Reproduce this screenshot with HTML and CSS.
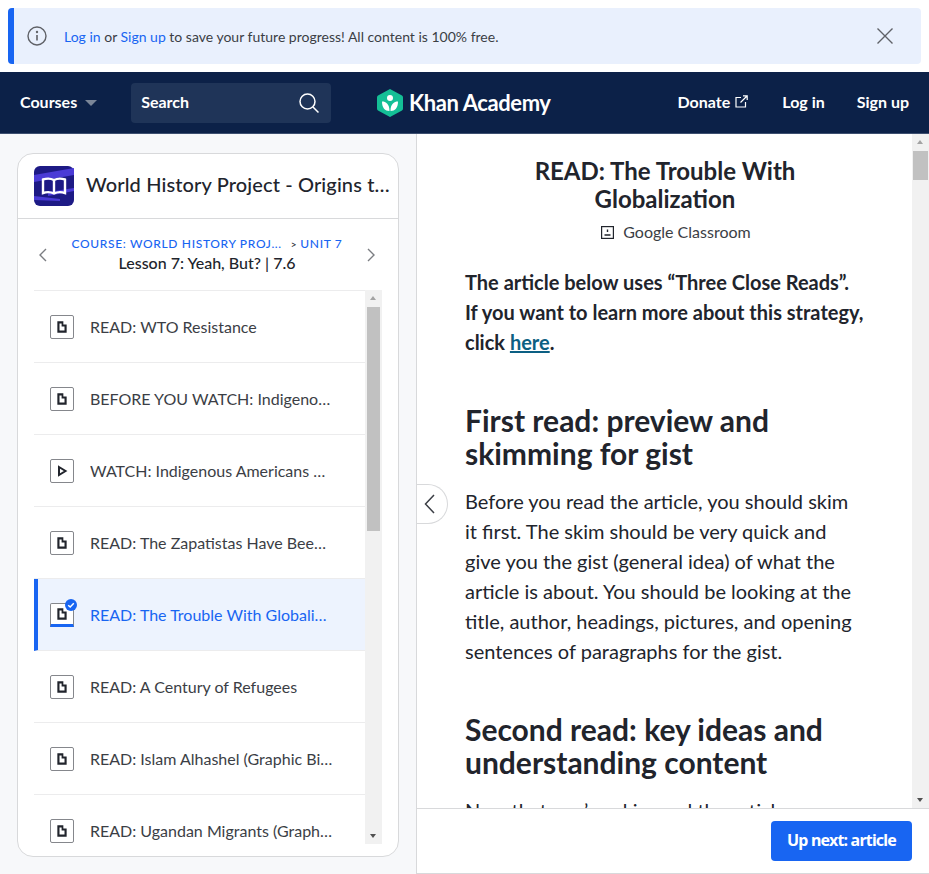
FILE: index.html
```html
<!DOCTYPE html>
<html lang="en">
<head>
    <meta charset="UTF-8">
    <meta name="viewport" content="width=device-width, initial-scale=1.0">
    <title>READ: The Trouble With Globalization</title>
    <link rel="stylesheet" href="styles.css">
</head>
<body>
    <svg class="defs" width="0" height="0">
        <symbol id="doc" viewBox="0 0 12 12"><path d="M1.350 .350H7.350V3.500H10.650V11.650H1.350ZM3.500 2.400V9.600H8.500V5.400H5.600V2.400Z" fill="#21242c" fill-rule="evenodd"/></symbol>
        <symbol id="play" viewBox="0 0 12 12"><path d="M3 2L9.500 6L3 10Z" fill="none" stroke="#21242c" stroke-width="2"/></symbol>
    </svg>

    <div class="banner">
        <svg class="banner-icon" width="20" height="20" viewBox="0 0 20 20" fill="none" stroke="#5f6167" stroke-width="1.400">
            <circle cx="10" cy="10" r="9"/>
            <path d="M10 9V14.500" stroke-width="1.600"/>
            <circle cx="10" cy="6" r="0.500"/>
        </svg>
        <p class="banner-text"><a href="#">Log in</a> or <a href="#">Sign up</a> to save your future progress! All content is 100% free.</p>
        <svg class="banner-close" width="16" height="16" viewBox="0 0 16 16" stroke="#5f6167" stroke-width="1.400"><path d="M0.500 0.500L15.500 15.500M15.500 0.500L0.500 15.500"/></svg>
    </div>

    <nav class="nav">
        <div class="nav-left">
            <a class="nav-link" href="#">Courses</a>
            <span class="caret"></span>
            <div class="search">
                <span>Search</span>
                <svg width="22" height="22" viewBox="0 0 22 22" fill="none" stroke="#fff" stroke-width="1.500"><circle cx="9.500" cy="9.500" r="7.500"/><path d="M15 15L20.500 20.500"/></svg>
            </div>
        </div>
        <a class="logo" href="#">
            <svg width="26" height="28" viewBox="0 0 26 28">
                <path d="M13 0L25 6.500Q26 7 26 8.500V19.500Q26 21 25 21.500L13 28L1 21.500Q0 21 0 19.500V8.500Q0 7 1 6.500Z" fill="#14bf96"/>
                <circle cx="13" cy="9" r="3" fill="#fff"/>
                <path d="M5 12.500C9 12.500 12.500 15 12.500 22C8 22 5 19 5 12.500ZM21 12.500C17 12.500 13.500 15 13.500 22C18 22 21 19 21 12.500Z" fill="#fff"/>
            </svg>
            <span class="logo-text">Khan Academy</span>
        </a>
        <div class="nav-right">
            <a class="nav-link donate" href="#">Donate
                <svg width="13" height="13" viewBox="0 0 13 13" fill="none" stroke="#fff" stroke-width="1.200"><path d="M6 2.500H1V12H10.500V7M5.500 7.500L12 1M8 .8H12.200V5"/></svg>
            </a>
            <a class="nav-link login" href="#">Log in</a>
            <a class="nav-link" href="#">Sign up</a>
        </div>
    </nav>

    <div class="layout">
        <aside class="side">
            <div class="card">
                <div class="card-head">
                    <svg class="course-icon" width="40" height="40" viewBox="0 0 40 40">
                        <rect width="40" height="40" rx="6" fill="#1d1a85"/>
                        <path d="M0 9L40 2V9L0 16ZM14 26L40 22V25L14 30ZM0 30L26 33V35L0 34Z" fill="#4a3bd6"/>
                        <path d="M9 13.500Q15 11.500 20 14Q25 11.500 31 13.500V27Q25 25 20 27.500Q15 25 9 27Z" fill="none" stroke="#fff" stroke-width="2.400"/>
                        <path d="M20 14V27" stroke="#fff" stroke-width="2.400"/>
                    </svg>
                    <h2 class="course-title">World History Project - Origins to the Present</h2>
                </div>
                <div class="lesson-head">
                    <svg class="chev" width="9" height="14" viewBox="0 0 9 14" fill="none" stroke="#7b7d82" stroke-width="1.400"><path d="M8 1L2 7L8 13"/></svg>
                    <div class="lesson-info">
                        <div class="crumbs"><a href="#">Course: World History Proj...</a><span class="crumb-sep">&gt;</span><a href="#">Unit 7</a></div>
                        <div class="lesson-name">Lesson 7: Yeah, But? | 7.6</div>
                    </div>
                    <svg class="chev" width="9" height="14" viewBox="0 0 9 14" fill="none" stroke="#7b7d82" stroke-width="1.400"><path d="M1 1L7 7L1 13"/></svg>
                </div>
                <div class="list-wrap">
                    <ul class="list">
                        <li class="row"><span class="kind"><svg width="12" height="12"><use href="#doc"/></svg></span><span class="row-text">READ: WTO Resistance</span></li>
                        <li class="row"><span class="kind"><svg width="12" height="12"><use href="#doc"/></svg></span><span class="row-text">BEFORE YOU WATCH: Indigenous Americans</span></li>
                        <li class="row"><span class="kind"><svg width="12" height="12"><use href="#play"/></svg></span><span class="row-text">WATCH: Indigenous Americans and Globalization</span></li>
                        <li class="row"><span class="kind"><svg width="12" height="12"><use href="#doc"/></svg></span><span class="row-text">READ: The Zapatistas Have Been Fighting</span></li>
                        <li class="row current"><span class="kind"><svg width="12" height="12"><use href="#doc"/></svg><svg class="check" width="12" height="12" viewBox="0 0 12 12"><circle cx="6" cy="6" r="6" fill="#1865f2"/><path d="M3.200 6.200L5.200 8L8.800 4.200" fill="none" stroke="#fff" stroke-width="1.500"/></svg></span><span class="row-text">READ: The Trouble With Globalization</span></li>
                        <li class="row"><span class="kind"><svg width="12" height="12"><use href="#doc"/></svg></span><span class="row-text">READ: A Century of Refugees</span></li>
                        <li class="row"><span class="kind"><svg width="12" height="12"><use href="#doc"/></svg></span><span class="row-text">READ: Islam Alhashel (Graphic Biography)</span></li>
                        <li class="row"><span class="kind"><svg width="12" height="12"><use href="#doc"/></svg></span><span class="row-text">READ: Ugandan Migrants (Graphic Biography)</span></li>
                    </ul>
                    <div class="bar bar-list">
                        <span class="arrow up"></span>
                        <div class="thumb"></div>
                        <span class="arrow down"></span>
                    </div>
                </div>
            </div>
        </aside>

        <main class="content">
            <div class="content-top">
                <article class="article">
                    <h1 class="article-title">READ: The Trouble With Globalization</h1>
                    <div class="classroom">
                        <svg width="13" height="13" viewBox="0 0 13 13" fill="none" stroke="#21242c" stroke-width="1.200"><rect x=".6" y=".6" width="11.800" height="11.800"/><path d="M6.500 3.500V6M3.500 9H9.500" stroke-width="1.400"/></svg>
                        <span>Google Classroom</span>
                    </div>
                    <p class="intro">The article below uses “Three Close Reads”. If you want to learn more about this strategy, click <a href="#">here</a>.</p>
                    <h2>First read: preview and skimming for gist</h2>
                    <p>Before you read the article, you should skim it first. The skim should be very quick and give you the gist (general idea) of what the article is about. You should be looking at the title, author, headings, pictures, and opening sentences of paragraphs for the gist.</p>
                    <h2>Second read: key ideas and understanding content</h2>
                    <p>Now that you’ve skimmed the article</p>
                </article>
                <div class="bar bar-page">
                    <span class="arrow up"></span>
                    <div class="thumb"></div>
                    <span class="arrow down"></span>
                </div>
                <button class="collapse" type="button" aria-label="Collapse">
                    <svg width="11" height="20" viewBox="0 0 11 20" fill="none" stroke="#3b3e45" stroke-width="1.500"><path d="M10 1L1.500 10L10 19"/></svg>
                </button>
            </div>
            <footer class="foot">
                <button class="next" type="button">Up next: article</button>
            </footer>
        </main>
    </div>
</body>
</html>
```

FILE: styles.css
```css
* {
    box-sizing: border-box;
}

html, body {
    height: 100%;
}

body {
    margin: 0;
    height: 874px;
    overflow: hidden;
    display: flex;
    flex-direction: column;
    background: #fff;
    color: #21242c;
    font-family: "Lato", "Liberation Sans", sans-serif;
}

a {
    text-decoration: none;
}

.defs {
    position: absolute;
}

/* banner */
.banner {
    height: 56px;
    margin: 8px 8px 8px;
    padding: 0 28px 0 13px;
    display: flex;
    align-items: center;
    flex-shrink: 0;
    background: #e9f0fd;
    border-left: 6px solid #1865f2;
    border-radius: 4px;
}

.banner-icon {
    flex-shrink: 0;
}

.banner-text {
    flex: 1;
    margin: 0 0 0 17px;
    font-size: 14px;
    color: #3b3e45;
}

.banner-text a {
    color: #1865f2;
}

/* nav */
.nav {
    height: 62px;
    flex-shrink: 0;
    padding: 0 20px 2px;
    display: flex;
    align-items: center;
    position: relative;
    background: #0c2148;
    border-bottom: 1px solid #3d4f70;
    color: #fff;
}

.nav-left, .nav-right {
    display: flex;
    align-items: center;
}

.nav-right {
    margin-left: auto;
}

.nav-link {
    color: #fff;
    font-size: 16px;
    font-weight: 700;
}

.caret {
    margin: 2px 0 0 8px;
    border-left: 6px solid transparent;
    border-right: 6px solid transparent;
    border-top: 6px solid #7b8698;
}

.search {
    width: 200px;
    height: 40px;
    margin: 2px 0 0 34px;
    padding: 0 11px 2px 10px;
    display: flex;
    align-items: center;
    justify-content: space-between;
    background: #1f3458;
    border-radius: 4px;
    font-size: 16px;
    font-weight: 700;
}

.search svg {
    margin-top: 2px;
}

.logo {
    position: absolute;
    left: 377px;
    top: 17px;
    display: flex;
    align-items: center;
    gap: 6px;
    color: #fff;
    font-size: 22px;
    font-weight: 700;
    letter-spacing: -0.4px;
}

.logo-text {
    margin-bottom: 1px;
}

.donate {
    display: flex;
    align-items: center;
    gap: 5px;
}

.login {
    margin: 0 32px 0 34px;
}

/* left side */
.layout {
    flex: 1;
    display: flex;
    min-height: 0;
}

.side {
    width: 416px;
    flex-shrink: 0;
    padding: 19px 17px 17px;
    background: #f7f8fa;
}

.card {
    height: 100%;
    display: flex;
    flex-direction: column;
    background: #fff;
    border: 1px solid #d8d9db;
    border-radius: 16px;
}

.card-head {
    height: 65px;
    flex-shrink: 0;
    padding: 0 8px 0 16px;
    display: flex;
    align-items: center;
    gap: 12px;
    border-bottom: 1px solid #d8d9db;
}

.course-icon {
    flex-shrink: 0;
}

.course-title {
    margin: 0 0 4px;
    font-size: 20px;
    font-weight: 500;
    letter-spacing: 0.12px;
    white-space: nowrap;
    overflow: hidden;
    text-overflow: ellipsis;
}

.lesson-head {
    height: 71px;
    flex-shrink: 0;
    padding: 1px 22px 0 20px;
    display: flex;
    align-items: center;
    justify-content: space-between;
}

.lesson-info {
    text-align: center;
}

.crumbs {
    font-size: 12px;
    line-height: 16px;
    font-weight: 500;
    letter-spacing: 0.65px;
    text-transform: uppercase;
}

.crumbs a {
    color: #1865f2;
}

.crumb-sep {
    margin: 0 3px 0 9px;
    font-size: 10px;
}

.lesson-name {
    font-size: 16px;
    line-height: 22px;
    font-weight: 500;
}

.list-wrap {
    flex: 1;
    min-height: 0;
    margin: 0 16px 12px 16px;
    display: flex;
    overflow: hidden;
}

.list {
    flex: 1;
    min-width: 0;
    margin: 0;
    padding: 0;
    list-style: none;
    border-top: 1px solid #ececed;
}

.row {
    height: 72px;
    padding: 0 32px 0 16px;
    display: flex;
    align-items: center;
    gap: 16px;
    border-bottom: 1px solid #ececed;
    font-size: 16px;
    color: #3b3e45;
}

.row-text {
    white-space: nowrap;
    overflow: hidden;
    text-overflow: ellipsis;
}

.kind {
    width: 24px;
    height: 24px;
    flex-shrink: 0;
    position: relative;
    display: flex;
    align-items: center;
    justify-content: center;
    background: #fff;
    border: 1px solid #85878c;
    border-radius: 2px;
}

.current {
    padding-left: 12px;
    background: #edf3fe;
    border-left: 4px solid #1865f2;
    color: #1865f2;
}

.current .kind {
    border-bottom: 3px solid #1865f2;
    border-radius: 2px 2px 0 0;
}

.check {
    position: absolute;
    top: -5px;
    right: -4px;
}

/* fake scrollbars, the page is a still */
.bar {
    flex-shrink: 0;
    position: relative;
    background: #f1f1f1;
}

.bar-list {
    width: 17px;
}

.bar-list .thumb {
    position: absolute;
    top: 17px;
    left: 2px;
    width: 13px;
    height: 224px;
    background: #c1c1c1;
}

.bar-page {
    width: 17px;
}

.bar-page .thumb {
    position: absolute;
    top: 17px;
    left: 1px;
    width: 15px;
    height: 29px;
    background: #c1c1c1;
}

.arrow {
    position: absolute;
    left: 5px;
    border-left: 3.5px solid transparent;
    border-right: 3.5px solid transparent;
}

.arrow.up {
    top: 6px;
    border-bottom: 4px solid #a3a3a3;
}

.arrow.down {
    bottom: 6px;
    border-top: 4px solid #505050;
}

/* right side */
.content {
    flex: 1;
    min-width: 0;
    display: flex;
    flex-direction: column;
    border-left: 1px solid #d8d9db;
}

.content-top {
    flex: 1;
    min-height: 0;
    display: flex;
    position: relative;
}

.article {
    flex: 1;
    min-width: 0;
    padding: 23px 47px 0 48px;
    overflow: hidden;
}

.article-title {
    width: 340px;
    margin: 0 auto;
    text-align: center;
    font-size: 24px;
    line-height: 28px;
    font-weight: 700;
}

.classroom {
    margin-top: 9px;
    padding-left: 22px;
    display: flex;
    align-items: center;
    justify-content: center;
    gap: 9px;
    font-size: 16px;
    line-height: 20px;
    color: #3b3e45;
}

.article p {
    margin: 0;
    font-size: 20px;
    line-height: 30px;
}

.article .intro {
    margin-top: 25px;
    font-weight: 700;
}

.intro a {
    color: #0c5f83;
    text-decoration: underline;
}

.article h2 {
    margin: 47px 0 16px;
    font-size: 30px;
    line-height: 33px;
    font-weight: 700;
}

.collapse {
    position: absolute;
    left: 0;
    top: 350px;
    width: 31px;
    height: 40px;
    padding: 0 0 0 7px;
    display: flex;
    align-items: center;
    background: #fff;
    border: 1px solid #d8d9db;
    border-left: none;
    border-radius: 0 20px 20px 0;
}

.foot {
    height: 66px;
    flex-shrink: 0;
    padding: 0 17px 0 0;
    display: flex;
    align-items: center;
    justify-content: flex-end;
    background: #fff;
    border-top: 1px solid #d8d9db;
    border-bottom: 1px solid #d8d9db;
}

.next {
    width: 141px;
    height: 40px;
    padding: 0 0 2px;
    background: #1865f2;
    border: none;
    border-radius: 4px;
    color: #fff;
    font-family: "Noto Sans", sans-serif;
    font-size: 16px;
    font-weight: 700;
    letter-spacing: -0.8px;
}
```
